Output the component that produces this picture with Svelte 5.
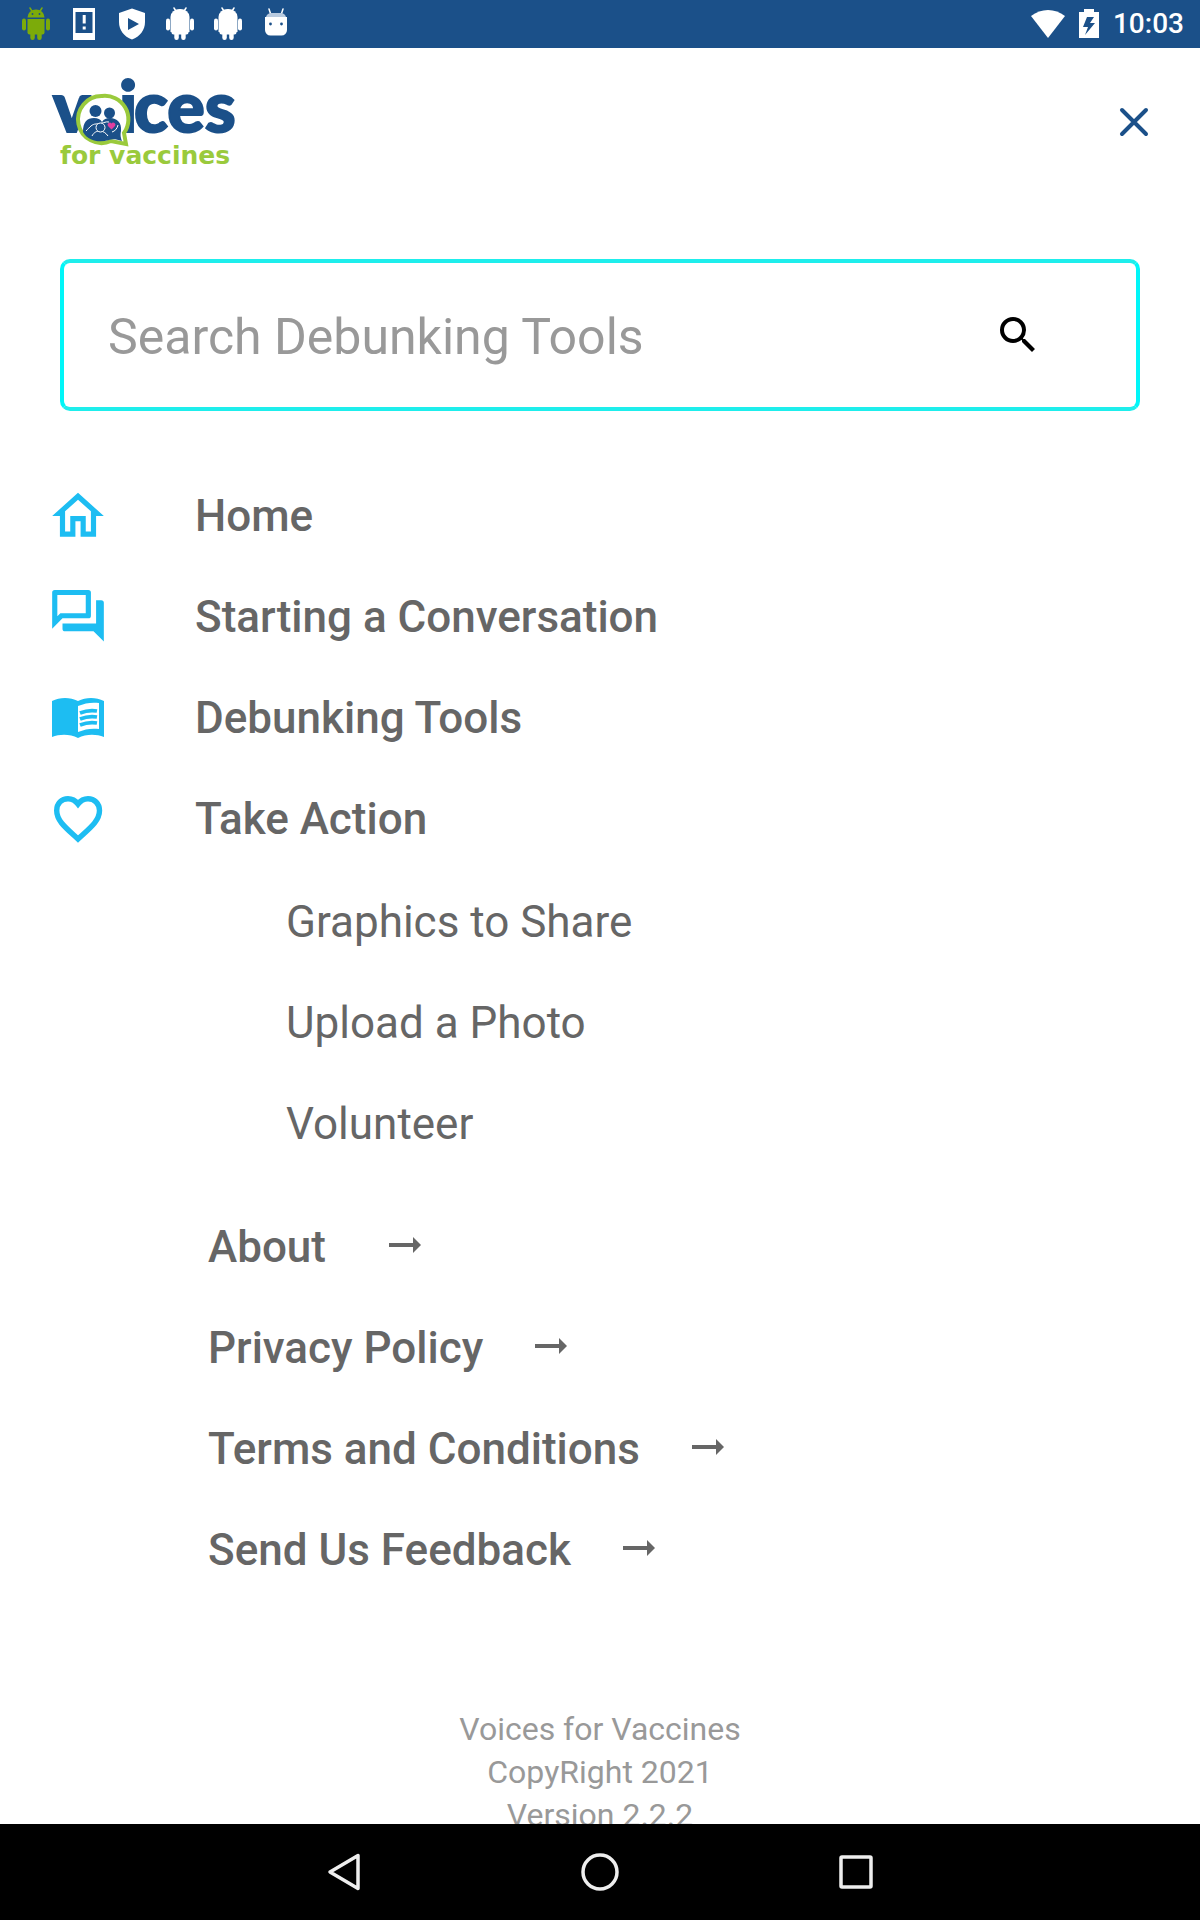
<script>
  let query = $state('');

  const sections = [
    { label: 'Home', icon: 'home' },
    { label: 'Starting a Conversation', icon: 'forum' },
    { label: 'Debunking Tools', icon: 'book' },
    { label: 'Take Action', icon: 'heart' }
  ];
  const actions = ['Graphics to Share', 'Upload a Photo', 'Volunteer'];
  const links = ['About ', 'Privacy Policy', 'Terms and Conditions', 'Send Us Feedback'];
</script>

{#snippet robot(cls)}
  <svg class={cls} viewBox="0 0 48 48" aria-hidden="true">
    <path d="M15.500 17.500a8.500 8 0 0 1 17 0z" />
    <path d="M18 8l2.500 4M30 8l-2.500 4" class="feeler" />
    <path d="M15.500 19h17v13.500a2 2 0 0 1-2 2h-13a2 2 0 0 1-2-2z" />
    <rect x="10" y="18.500" width="4" height="12" rx="2" />
    <rect x="34" y="18.500" width="4" height="12" rx="2" />
    <rect x="18.300" y="30" width="4.500" height="10" rx="2.200" />
    <rect x="25.200" y="30" width="4.500" height="10" rx="2.200" />
    {#if cls === 'green'}
      <circle cx="20.500" cy="14" r="0.900" class="hole" />
      <circle cx="27.500" cy="14" r="0.900" class="hole" />
    {:else}
      <path d="M14.500 20v-3a9.500 8 0 0 1 19 0v15h-19z" />
    {/if}
  </svg>
{/snippet}

<div class="screen">
  <div class="status">
    <div class="notices">
      {@render robot('green')}
      <svg viewBox="0 0 48 48" aria-hidden="true">
        <path fill-rule="evenodd" d="M13 8h22v32H13zM15.500 12v21h17V12z" />
        <path d="M22.700 15h3v8.500h-3zM22.700 26.500h3v3h-3z" />
      </svg>
      <svg viewBox="0 0 48 48" aria-hidden="true">
        <path fill-rule="evenodd" d="M24 8.500l13 4.500v9c0 8-5 14.500-13 17.500-8-3-13-9.500-13-17.500v-9zM20 18v12l11-6z" />
      </svg>
      {@render robot('white')}
      {@render robot('white')}
      <svg viewBox="0 0 48 48" aria-hidden="true">
        <path d="M17 9l2 6M31 9l-2 6" class="feeler" />
        <path d="M13 17h22v13a5.500 5.500 0 0 1-5.500 5.500h-11A5.500 5.500 0 0 1 13 30z" />
        <path d="M14 17c1-3 3-4 5-4h10c2 0 4 1 5 4z" class="cap" />
        <circle cx="18.500" cy="24" r="1.400" class="hole" />
        <circle cx="29.500" cy="24" r="1.400" class="hole" />
      </svg>
    </div>
    <div class="system">
      <svg viewBox="0 0 36 30" class="wifi" aria-hidden="true"><path d="M1 7C11-1 25-1 35 7L18 29z" /></svg>
      <svg viewBox="0 0 20 30" class="battery" aria-hidden="true">
        <path fill-rule="evenodd" d="M5 0h10v3h5v26H0V3h5zM8 8L4 18h5L6 26l10-12h-5l4-6z" />
      </svg>
      <span>10:03</span>
    </div>
  </div>

  <main>
    <header>
      <svg class="logo" viewBox="50 60 190 124" role="img" aria-label="Voices for Vaccines">
        <text y="132" class="word"><tspan x="53">v</tspan><tspan x="119">i</tspan><tspan x="134">ces</tspan></text>
        <path d="M102 96a23.500 23.500 0 1 0 9 45l15 3-2-11A23.500 23.500 0 0 0 102 96z" class="bubble" />
        <path d="M83 132c0-10 4-14 11-14 4 0 6 1 8 4 2-3 4-4 8-4 7 0 12 5 11 13-1 5 0 7 1 10-6-2-10-2-13-1-10 3-21 1-26-8z" class="blue" />
        <circle cx="95.500" cy="111" r="6" class="blue" />
        <circle cx="109.500" cy="113" r="5.500" class="blue" />
        <path d="M86 131c4-4 6-7 10-7 6 0 10-3 13-2M92 136c2-4 5-5 8-5s6 2 8 5M112 132c3-1 5-3 6-7" class="limb" />
        <circle cx="100.500" cy="127.500" r="4.500" class="child" />
        <path d="M111.500 129.500l-3.500-3.500a2 2 0 0 1 3.500-2.500 2 2 0 0 1 3.500 2.500z" class="love" />
        <text x="60" y="164" class="tag">for vaccines</text>
      </svg>
      <button class="close" aria-label="Close menu">
        <svg viewBox="0 0 48 48" aria-hidden="true"><path d="M12 12l24 24M36 12L12 36" /></svg>
      </button>
    </header>

    <form class="search" onsubmit={(e) => e.preventDefault()}>
      <input type="text" aria-label="Search Debunking Tools" placeholder="Search Debunking Tools" bind:value={query} />
      <button aria-label="Search">
        <svg viewBox="0 0 24 24" aria-hidden="true">
          <path d="M15.500 14h-.79l-.28-.27A6.471 6.471 0 0 0 16 9.500 6.500 6.500 0 1 0 9.500 16c1.610 0 3.090-.59 4.230-1.570l.27.28v.79l5 4.990L20.490 19l-4.990-5zm-6 0C7.010 14 5 11.990 5 9.500S7.010 5 9.500 5 14 7.010 14 9.500 11.990 14 9.500 14z" />
        </svg>
      </button>
    </form>

    <nav>
      <ul class="sections">
        {#each sections as s}
          <li>
            <a href="#{s.icon}">
              {#if s.icon === 'home'}
                <svg viewBox="0 0 24 24" aria-hidden="true"><path d="M12 5.690l5 4.500V18h-2v-6H9v6H7v-7.810l5-4.500M12 3L2 12h3v8h6v-6h2v6h6v-8h3L12 3z" /></svg>
              {:else if s.icon === 'forum'}
                <svg viewBox="0 0.500 24 24" aria-hidden="true"><path d="M15 4v7H5.170L4 12.170V4h11m1-2H3a1 1 0 0 0-1 1v14l4-4h10a1 1 0 0 0 1-1V3a1 1 0 0 0-1-1m5 4h-2v9H6v2a1 1 0 0 0 1 1h11l4 4V7a1 1 0 0 0-1-1z" /></svg>
              {:else if s.icon === 'book'}
                <svg viewBox="0 0 62 62" aria-hidden="true">
                  <path fill-rule="evenodd" d="M5 14c8-4 18-4 26 0 8-4 18-4 26 0v36c-8-3-18-3-26 1-8-4-18-4-26-1zM31 19v26c7-3 14-4 21-3V16c-7-1-14 0-21 3z" />
                  <path d="M33 26c5-2 11-3 17-2M33 32c5-2 11-3 17-2M33 38c5-2 11-3 17-2" class="lines" />
                </svg>
              {:else}
                <svg viewBox="0 0 62 62" aria-hidden="true">
                  <path d="M31 51C19 40 9.700 33 9.700 22.500c0-7 5-11.800 11.300-11.800 4 0 7.500 2 10 5.300 2.500-3.300 6-5.300 10-5.300 6.300 0 11.500 4.800 11.500 11.800C52.500 33 43 40 31 51z" class="heart" />
                </svg>
              {/if}
              <span>{s.label}</span>
            </a>
          </li>
        {/each}
      </ul>
      <ul class="actions">
        {#each actions as a}
          <li><a href="#action">{a}</a></li>
        {/each}
      </ul>
      <ul class="links">
        {#each links as l}
          <li>
            <a href="#info">
              <span>{l}</span>
              <svg viewBox="0 0 32 20" aria-hidden="true"><path d="M0 6h24V0l8 8-8 8v-6H0z" /></svg>
            </a>
          </li>
        {/each}
      </ul>
    </nav>

    <footer>
      <p>Voices for Vaccines</p>
      <p>CopyRight 2021</p>
      <p>Version 2.2.2</p>
    </footer>
  </main>

  <div class="system-nav">
    <button aria-label="Back"><svg viewBox="0 0 48 48" aria-hidden="true"><path d="M38 7.500v33L10 24z" /></svg></button>
    <button aria-label="Home screen"><svg viewBox="0 0 48 48" aria-hidden="true"><circle cx="24" cy="24" r="17" /></svg></button>
    <button aria-label="Recent apps"><svg viewBox="0 0 48 48" aria-hidden="true"><rect x="9" y="9" width="30" height="30" rx="1" /></svg></button>
  </div>
</div>

<style>
  :global(body) { background: #fff; }
  .screen {
    display: flex;
    flex-direction: column;
    height: 100vh;
    font-family: Roboto, "Liberation Sans", sans-serif;
    color: #666;
  }
  svg { display: block; flex: none; }
  button { border: 0; padding: 0; background: none; cursor: pointer; }
  a { color: inherit; text-decoration: none; }
  ul { list-style: none; margin: 0; padding: 0; }

  .status {
    flex: none;
    display: flex;
    justify-content: space-between;
    align-items: center;
    height: 48px;
    padding: 0 16px 0 12px;
    background: #1b5089;
    color: #fff;
    font-size: 28px;
    font-weight: 500;
    line-height: 50px;
  }
  .notices, .system { display: flex; align-items: center; }
  .status svg { fill: #fff; }
  .notices svg { width: 48px; height: 48px; }
  .notices .green { fill: #7cab0a; stroke: none; }
  .feeler { stroke: #fff; stroke-width: 1.500; stroke-linecap: round; }
  .green .feeler { stroke: #7cab0a; }
  .notices .hole { fill: #1b5089; }
  .notices .cap { fill: #b9cbe0; }
  .wifi { width: 36px; height: 30px; margin-right: 13px; }
  .battery { width: 20px; height: 30px; margin-right: 14px; }

  main { flex: 1; min-height: 0; overflow-y: auto; scrollbar-width: none; }
  header {
    display: flex;
    justify-content: space-between;
    align-items: center;
    padding: 12px 42px 0 50px;
  }
  .logo { width: 190px; height: 124px; }
  .word { font: 900 70px Lato, sans-serif; fill: #1b5089; stroke: #1b5089; stroke-width: 2; }
  .tag { font: bold 25px "DejaVu Sans", sans-serif; fill: #9aca3c; }
  .bubble { fill: #fff; stroke: #9aca3c; stroke-width: 4; }
  .blue { fill: #1b5089; }
  .limb { fill: none; stroke: #fff; stroke-width: 1; }
  .child { fill: #1b5089; stroke: #fff; stroke-width: 1; }
  .love { fill: #e23fa0; }
  .close svg { width: 48px; height: 48px; stroke: #1b5089; stroke-width: 4; stroke-linecap: round; }

  .search {
    display: flex;
    align-items: center;
    box-sizing: border-box;
    height: 152px;
    margin: 75px 60px 0;
    padding: 0 94px 0 44px;
    border: 4px solid;
    border-color: #1eeeec #00f6f8;
    border-radius: 10px;
  }
  .search input {
    flex: 1;
    min-width: 0;
    border: 0;
    padding: 4px 0 0;
    outline: 0;
    background: none;
    font: 50px Roboto, "Liberation Sans", sans-serif;
    color: #666;
  }
  .search input::placeholder { color: #999; opacity: 1; }
  .search svg { width: 48px; height: 48px; }

  nav { padding-top: 78px; font-size: 44px; line-height: 54px; }
  nav ul { display: flex; flex-direction: column; gap: 47px; }
  nav a { display: flex; align-items: center; height: 54px; }
  .sections { padding-left: 47px; font-weight: 500; }
  .sections a { gap: 86px; }
  .sections svg { width: 62px; height: 62px; fill: #1dbdf2; }
  .lines { fill: none; stroke: #1dbdf2; stroke-width: 3.800; }
  .sections .heart { fill: none; stroke: #1dbdf2; stroke-width: 5.400; }
  .actions { margin-top: 49px; padding-left: 286px; }
  .links { margin-top: 69px; padding-left: 208px; font-weight: 500; }
  .links a { gap: 52px; }
  .links span { white-space: pre; }
  .links svg { width: 32px; height: 20px; fill: #666; }

  footer { margin-top: 131px; text-align: center; font-size: 32px; line-height: 43px; color: #999; }
  footer p { margin: 0; }

  .system-nav { flex: none; display: flex; justify-content: center; height: 96px; background: #000; }
  .system-nav button { display: grid; place-items: center; width: 256px; }
  .system-nav svg { width: 48px; height: 48px; fill: none; stroke: #eee; stroke-width: 3.500; stroke-linejoin: round; }
</style>
